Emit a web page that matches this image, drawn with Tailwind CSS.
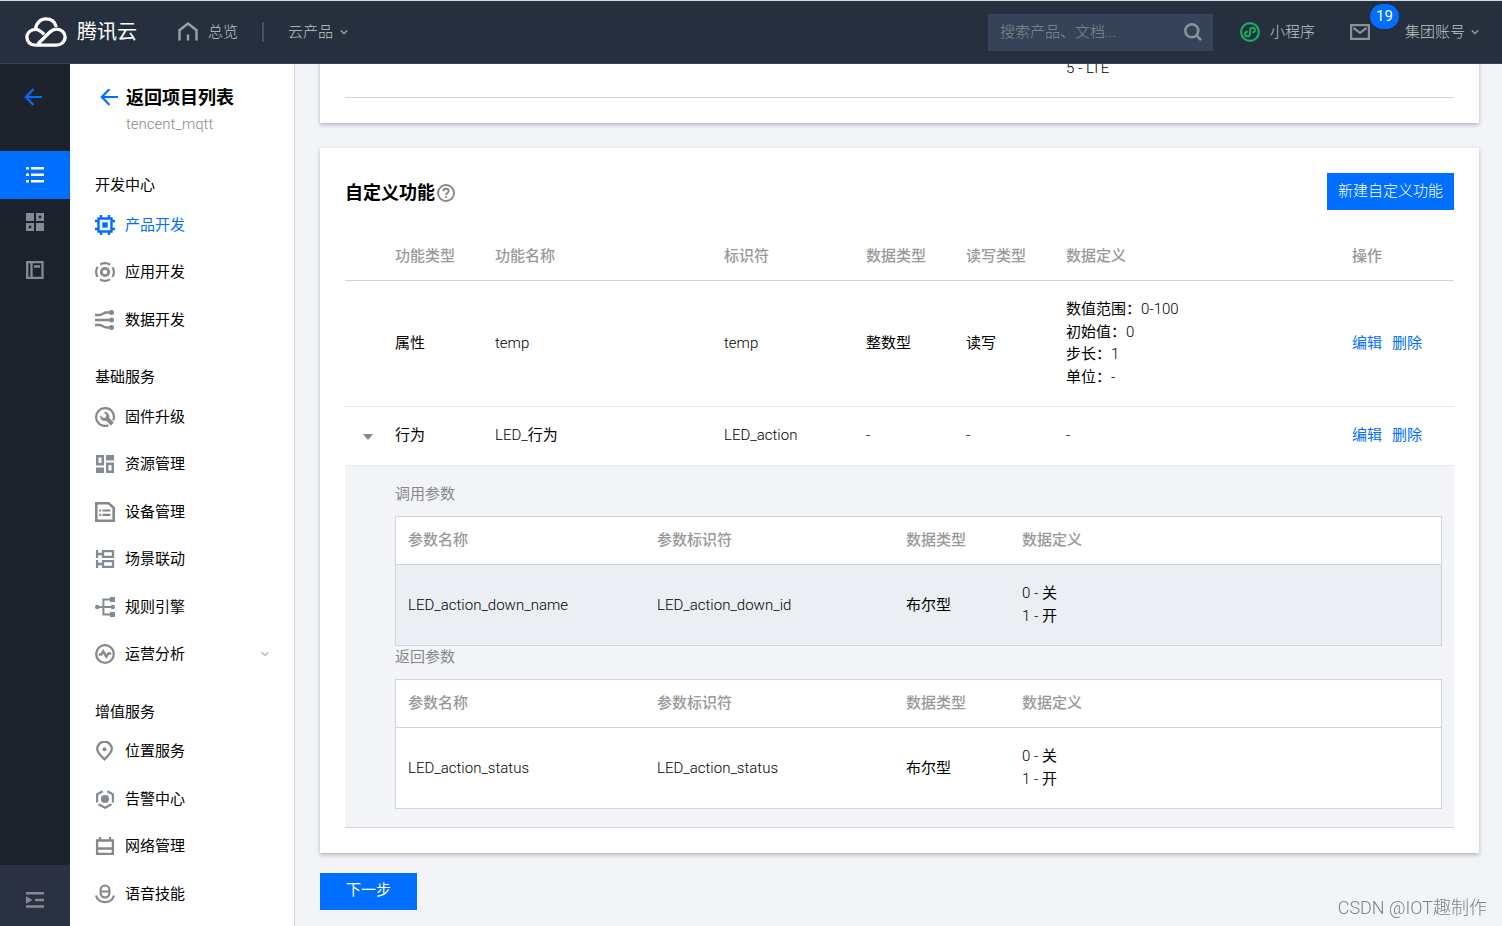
<!DOCTYPE html>
<html lang="zh-CN">
<head>
<meta charset="utf-8">
<meta name="viewport" content="width=device-width, initial-scale=1">
<title>腾讯云 - 产品开发</title>
<script src="https://cdn.jsdelivr.net/npm/@tailwindcss/browser@4"></script>
</head>
<body class="flex h-screen flex-col overflow-hidden bg-[#f2f4f8] font-['Roboto','Noto_Sans_CJK_SC',sans-serif] text-[15px] leading-normal font-light text-black">

<header class="flex h-16 shrink-0 items-center border-t border-b border-t-[#d3dae0] border-b-[#364255] bg-[#262f3e] pr-[23px] pl-[25px] text-[#c1c6c8]">
  <a href="#" class="flex items-center gap-2.5 text-[20px] font-normal text-white" aria-label="腾讯云">
    <svg class="h-[30px] w-[42px]" viewBox="0 0 42 30" fill="none" stroke="currentColor" stroke-width="3.3">
      <path d="M10.6 12.2C11 6 15.600 1.900 21 1.900c5 0 9 3 10.300 8"/>
      <path d="M19.200 17.400C16 14 14 12.300 10.600 12.300 5.700 12.300 1.900 15.800 1.900 20.300s3.800 7.900 8.700 7.900h20.500c5 0 9-3.500 9-8.100 0-4.500-3.700-7.900-8.300-7.900-3.100 0-5.200 1.200-7.600 3.500L12.800 27"/>
    </svg>
    <span>腾讯云</span>
  </a>
  <a href="#" class="ml-[41px] flex items-center gap-2.5">
    <svg class="size-5" viewBox="0 0 20 20" fill="none" stroke="#9ba1a8" stroke-width="2.400"><path d="M1.500 18.500V8.200L10 1.600l8.500 6.600v10.300M10 12.500v6"/></svg>
    <span>总览</span>
  </a>
  <span class="mx-6 h-5 w-0.5 bg-[#475061]"></span>
  <button type="button" class="flex items-center gap-[7px]">云产品
    <svg class="size-2" viewBox="0 0 8 8" fill="none" stroke="#8a9299" stroke-width="1.500"><path d="m.8 2.400 3.200 3.200 3.200-3.200"/></svg>
  </button>
  <form class="ml-auto flex h-[37px] w-[225px] items-center bg-[#354258] pr-[11px] pl-3">
    <input type="text" aria-label="搜索" placeholder="搜索产品、文档..." class="min-w-0 flex-1 bg-transparent outline-none placeholder:text-[#858a90]">
    <button type="submit" aria-label="搜索"><svg class="size-[18px]" viewBox="0 0 18 18" fill="none" stroke="#8b9299" stroke-width="2.600"><circle cx="7.800" cy="7.800" r="6.500"/><path d="m12.400 12.400 4.600 4.600"/></svg></button>
  </form>
  <a href="#" class="ml-[27px] flex items-center gap-2.5">
    <svg class="size-5" viewBox="0 0 20 20" fill="none" stroke="#1aad5c" stroke-width="2.200"><circle cx="10" cy="10" r="8.900"/><path stroke-width="1.900" d="M7.800 9.500c-1.700.1-2.800 1-2.800 2.400 0 1.300 1.100 2.300 2.500 2.300S10 13.200 10 11.900V8.100c0-1.300 1.100-2.300 2.500-2.300S15 6.800 15 8.100c0 1.400-1.100 2.300-2.800 2.400"/></svg>
    <span>小程序</span>
  </a>
  <a href="#" class="relative ml-[35px]" aria-label="消息">
    <svg class="h-4 w-5" viewBox="0 0 20 16" fill="none" stroke="#8b9299" stroke-width="2.200"><path d="M1.100 1.100h17.800v13.800H1.100zM3.500 4 10 8.800 16.500 4"/></svg>
    <span class="absolute -top-5 left-5 flex h-[25px] w-[29px] items-center justify-center rounded-full bg-[#006eff] font-normal text-white">19</span>
  </a>
  <button type="button" class="ml-[35px] flex items-center gap-1.5">集团账号
    <svg class="size-2" viewBox="0 0 8 8" fill="none" stroke="#8a9299" stroke-width="1.500"><path d="m.8 2.400 3.200 3.200 3.200-3.200"/></svg>
  </button>
</header>

<div class="flex min-h-0 flex-1">
  <nav class="flex w-[70px] shrink-0 flex-col bg-[#1e222d] text-[#848b93]" aria-label="控制台">
    <a href="#" class="flex h-[87px] items-start pt-6 pl-6 text-[#006eff]" aria-label="返回">
      <svg class="size-[18px]" viewBox="0 0 18 18" fill="none" stroke="currentColor" stroke-width="2.200"><path d="M9.500 1 1.800 9l7.700 8M2 9h16"/></svg>
    </a>
    <a href="#" class="flex h-12 items-center justify-center bg-[#006eff] text-white" aria-label="项目">
      <svg class="size-[18px]" viewBox="0 0 18 18" fill="currentColor"><path d="M0 1h3v2.500H0zM5 1h13v2.500H5zM0 7.500h3v2.500H0zM5 7.500h13v2.500H5zM0 14h3v2.500H0zM5 14h13v2.500H5z"/></svg>
    </a>
    <a href="#" class="flex h-[46px] items-center justify-center" aria-label="应用">
      <svg class="size-[18px]" viewBox="0 0 18 18" fill="currentColor" fill-rule="evenodd"><path d="M0 0h8v8H0zM10 0h8v8h-8zm2.700 2.700v2.600h2.600V2.700zM0 10h8v8H0zm2.700 2.700v2.600h2.600v-2.600zM10 10h8v8h-8z"/></svg>
    </a>
    <a href="#" class="flex h-[50px] items-center justify-center" aria-label="文档">
      <svg class="size-[18px]" viewBox="0 0 18 18" fill="none" stroke="currentColor" stroke-width="2.300"><path d="M1.200 1.200h15.300v15.600H1.200zM5.500 1v16M8 5.500h6"/></svg>
    </a>
    <button type="button" class="mt-auto flex h-[61px] items-center justify-center bg-[#293142] pt-2" aria-label="展开菜单">
      <svg class="size-[18px]" viewBox="0 0 18 18" fill="currentColor"><path d="M0 1h18v2.500H0zM0 5.300l6.500 3.700L0 12.700zM9 7.700h9v2.500H9zM0 14.300h18v2.500H0z"/></svg>
    </button>
  </nav>

  <aside class="w-[225px] shrink-0 overflow-hidden border-r border-[#cfd5de] bg-white">
    <a href="#" class="flex items-center gap-2 pt-5 pl-[30px] text-[18px] leading-7 font-bold">
      <svg class="size-[18px] text-[#006eff]" viewBox="0 0 18 18" fill="none" stroke="currentColor" stroke-width="2.200"><path d="M9.500 0 1.800 8l7.700 8M2 8h16"/></svg>
      返回项目列表
    </a>
    <p class="h-10 pt-px pl-14 text-[#888]">tencent_mqtt</p>

    <nav class="px-[25px] font-normal text-[#888]" aria-label="项目菜单">
      <h2 class="pt-[22px] pb-[5px] text-black">开发中心</h2>
      <a href="#" class="flex items-center gap-2.5 pt-3 pb-[13px] text-[#006eff]">
        <svg class="size-5" viewBox="0 0 20 20" fill="none" stroke="currentColor" stroke-width="2.400"><path d="M3.500 3.500h13v13h-13zM6 0v3M14 0v3M6 17v3M14 17v3M0 6h3M0 14h3M17 6h3M17 14h3"/><path fill="currentColor" stroke="none" d="M7.300 7.300h5.400v5.400H7.300z"/></svg>
        <span>产品开发</span>
      </a>
      <a href="#" class="flex items-center gap-2.5 pt-3 pb-[13px]">
        <svg class="size-5" viewBox="0 0 20 20" fill="none" stroke="currentColor"><circle cx="10" cy="10" r="3.700" stroke-width="2.800"/><circle cx="10" cy="10" r="8.900" stroke-width="2.200" stroke-dasharray="10.480 3.500" stroke-dashoffset="5.240"/></svg>
        <span class="text-black">应用开发</span>
      </a>
      <a href="#" class="flex items-center gap-2.5 pt-3 pb-[13px]">
        <svg class="size-5" viewBox="0 0 20 20" fill="none" stroke="currentColor" stroke-width="2.300"><path d="M0 5h4.500c3 0 4-2.500 7-2.500H16M0 10h16M0 15h4.500c3 0 4 2.500 7 2.500H16"/><g fill="currentColor" stroke="none"><circle cx="16.500" cy="2.500" r="2.500"/><circle cx="16.500" cy="10" r="2.500"/><circle cx="16.500" cy="17.500" r="2.500"/></g></svg>
        <span class="text-black">数据开发</span>
      </a>

      <h2 class="pt-[22px] pb-[5px] text-black">基础服务</h2>
      <a href="#" class="flex items-center gap-2.5 pt-3 pb-[13px]">
        <svg class="size-5" viewBox="0 0 20 20" fill="none" stroke="currentColor" stroke-width="2.200"><path d="M18.200 13.500A8.900 8.900 0 1 0 13.500 18.200"/><path fill="currentColor" stroke="none" d="M8.600 5.200a4.600 4.600 0 0 1 5.600 5.700l4.600 4.600-2.900 2.900-4.700-4.700a4.600 4.600 0 0 1-5.900-5.400l3 2.700 2.500-.6.600-2.500z"/></svg>
        <span class="text-black">固件升级</span>
      </a>
      <a href="#" class="flex items-center gap-2.5 pt-3 pb-[13px]">
        <svg class="size-5 text-[#848b93]" viewBox="0 0 20 20" fill="currentColor" fill-rule="evenodd"><path d="M1 1h8v10.500H1zm2.500 2.500v5.500h3V3.500zM11 1h8v5.500h-8zM1 13.500h8V19H1zM11 8.500h8V19h-8zm2.500 2.500v5.500h3V11z"/></svg>
        <span class="text-black">资源管理</span>
      </a>
      <a href="#" class="flex items-center gap-2.5 pt-3 pb-[13px]">
        <svg class="size-5" viewBox="0 0 20 20" fill="none" stroke="currentColor" stroke-width="2.600"><path d="M1.300 1.300h12.300l5.100 4.600v12.800H1.300z"/><path stroke-width="2.200" d="M4.200 8.500h2M7.500 8.500h8M4.200 12.800h2M7.500 12.800h8"/></svg>
        <span class="text-black">设备管理</span>
      </a>
      <a href="#" class="flex items-center gap-2.5 pt-3 pb-[13px]">
        <svg class="size-5 text-[#848b93]" viewBox="0 0 20 20" fill="none" stroke="currentColor" stroke-width="2.300"><path d="M2.100 1v8M2 5h5M8 2.200h10v5.600H8zM2.100 11v8M2 15h5M8 12.200h10v5.600H8z"/></svg>
        <span class="text-black">场景联动</span>
      </a>
      <a href="#" class="flex items-center gap-2.5 pt-3 pb-[13px]">
        <svg class="size-5 text-[#848b93]" viewBox="0 0 20 20" fill="none" stroke="currentColor" stroke-width="2"><path d="M2 10h16M15 2.400H8.400v15.200H15"/><g fill="currentColor" stroke="none"><circle cx="2.200" cy="10" r="2.200"/><circle cx="17.800" cy="10" r="2.200"/><path d="M15 0h5v5h-5zM15 15h5v5h-5z"/></g></svg>
        <span class="text-black">规则引擎</span>
      </a>
      <a href="#" class="flex items-center gap-2.5 pt-3 pb-[13px]">
        <svg class="size-5" viewBox="0 0 20 20" fill="none" stroke="currentColor" stroke-width="2.300"><circle cx="10" cy="10" r="8.800"/><path d="M3.800 10.500h2.400l2-3.200 3.200 5.400 2-3.200h2.800"/></svg>
        <span class="text-black">运营分析</span>
        <svg class="ml-auto size-2" viewBox="0 0 8 8" fill="none" stroke="#bbb" stroke-width="1.500"><path d="m.6 2.300 3.400 3.200 3.400-3.200"/></svg>
      </a>

      <h2 class="pt-[22px] pb-[5px] text-black">增值服务</h2>
      <a href="#" class="flex items-center gap-2.5 pt-3 pb-[13px]">
        <svg class="size-5" viewBox="0 0 20 20" fill="none" stroke="currentColor" stroke-width="2.300"><path d="M9.500 18.300C6 14.800 2.200 11.500 2.200 8a7.300 7.300 0 0 1 14.600 0c0 3.500-3.800 6.800-7.300 10.300z"/><circle cx="9.500" cy="8.200" r="2" fill="currentColor" stroke="none"/></svg>
        <span class="text-black">位置服务</span>
      </a>
      <a href="#" class="flex items-center gap-2.5 pt-3 pb-[13px]">
        <svg class="size-5 text-[#848b93]" viewBox="0 0 20 20" fill="none" stroke="currentColor" stroke-width="2.200"><path d="M7.700 2.200 2.100 5.300v8.200M12.300 2.200l5.600 3.100v8.200M3.500 15.200l6.500 3.600 6.500-3.600"/><circle cx="10" cy="10" r="4.100" fill="currentColor" stroke="none"/></svg>
        <span class="text-black">告警中心</span>
      </a>
      <a href="#" class="flex items-center gap-2.5 pt-3 pb-[13px]">
        <svg class="size-5" viewBox="0 0 20 20" fill="none" stroke="currentColor" stroke-width="2.300"><path d="M2.100 4.500h15.800v13.300H2.100zM5 1v3M15 1v3M2 12.500h16"/></svg>
        <span class="text-black">网络管理</span>
      </a>
      <a href="#" class="flex items-center gap-2.5 pt-3 pb-[13px]">
        <svg class="size-5" viewBox="0 0 20 20" fill="none" stroke="currentColor" stroke-width="2.200"><rect x="5.600" y="1.500" width="8.800" height="12" rx="4.400"/><path d="M6 7.500h8M1 11.500c1.200 4.200 4.600 6.700 9 6.700s7.800-2.500 9-6.700"/></svg>
        <span class="text-black">语音技能</span>
      </a>
    </nav>
  </aside>

  <main class="min-w-0 flex-1 overflow-hidden pr-[23px] pl-[25px]">
    <section class="-mt-[7px] mb-[25px] bg-white px-[25px] pb-[25px] shadow-[0_2px_4px_rgba(54,58,80,0.32)]">
      <div class="h-[41px] border-b border-[#cfd5de] pl-[721px]">5 - LTE</div>
    </section>

    <section class="bg-white p-[25px] shadow-[0_2px_4px_rgba(54,58,80,0.32)]">
      <div class="mb-5 flex items-center justify-between">
        <h1 class="flex items-center gap-0.5 pt-0.5 text-[18px] font-bold">自定义功能
          <svg class="size-[18px]" viewBox="0 0 18 18" fill="none" stroke="#888" stroke-width="1.900"><circle cx="9" cy="9" r="8"/><path d="M6.300 7.200c0-1.500 1.200-2.500 2.700-2.500s2.700 1 2.700 2.400c0 1.800-2.700 1.800-2.700 3.900M9 12.200v1.900"/></svg>
        </h1>
        <button type="button" class="h-[37px] bg-[#006eff] px-[11px] text-white">新建自定义功能</button>
      </div>

      <table class="w-full table-fixed text-left">
        <colgroup>
          <col class="w-[50px]"><col class="w-[100px]"><col class="w-[229px]"><col class="w-[142px]"><col class="w-[100px]"><col class="w-[100px]"><col class="w-[286px]"><col class="w-[102px]">
        </colgroup>
        <thead>
          <tr class="h-[50px] border-b border-[#cfd5de] text-[#999]">
            <td></td>
            <th class="pt-0.5 font-medium">功能类型</th><th class="pt-0.5 font-medium">功能名称</th><th class="pt-0.5 font-medium">标识符</th><th class="pt-0.5 font-medium">数据类型</th><th class="pt-0.5 font-medium">读写类型</th><th class="pt-0.5 font-medium">数据定义</th><th class="pt-0.5 font-medium">操作</th>
          </tr>
        </thead>
        <tbody>
          <tr class="h-[126px] border-b border-[#e5e8ed]">
            <td></td><td class="font-normal">属性</td><td>temp</td><td>temp</td><td class="font-normal">整数型</td><td class="font-normal">读写</td>
            <td><span class="font-normal">数值范围：</span>0-100<br><span class="font-normal">初始值：</span>0<br><span class="font-normal">步长：</span>1<br><span class="font-normal">单位：</span>-</td>
            <td class="font-normal text-[#006eff]"><div class="flex gap-2.5"><a href="#">编辑</a><a href="#">删除</a></div></td>
          </tr>
          <tr class="h-[59px] border-b border-[#e5e8ed]">
            <td><button type="button" class="flex pt-0.5 pl-[18px]" aria-label="收起"><svg class="h-1.5 w-2.5" viewBox="0 0 10 6" fill="#888"><path d="M0 0h10L5 6z"/></svg></button></td>
            <td class="font-normal">行为</td><td>LED_<span class="font-normal">行为</span></td><td>LED_action</td><td>-</td><td>-</td><td>-</td>
            <td class="font-normal text-[#006eff]"><div class="flex gap-2.5"><a href="#">编辑</a><a href="#">删除</a></div></td>
          </tr>
          <tr class="border-b border-[#cfd5de] bg-[#f2f4f8]">
            <td colspan="8" class="pt-[17px] pr-3 pb-[18px] pl-[50px]">
              <h3 class="mb-2.5 h-[23px] font-normal text-[#888]">调用参数</h3>
              <div class="border border-[#cfd5de] bg-white">
                <table class="w-full table-fixed text-left">
                  <colgroup><col class="w-[249px]"><col class="w-[249px]"><col class="w-[116px]"><col class="w-[431px]"></colgroup>
                  <thead><tr class="h-12 border-b border-[#cfd5de] text-[#999]"><th class="pl-3 font-medium">参数名称</th><th class="pl-3 font-medium">参数标识符</th><th class="pl-3 font-medium">数据类型</th><th class="pl-3 font-medium">数据定义</th></tr></thead>
                  <tbody><tr class="h-20 bg-[#ebeef3]"><td class="pl-3">LED_action_down_name</td><td class="pl-3">LED_action_down_id</td><td class="pl-3 font-normal">布尔型</td><td class="pl-3">0 - <span class="font-normal">关</span><br>1 - <span class="font-normal">开</span></td></tr></tbody>
                </table>
              </div>
              <h3 class="mb-2.5 h-[23px] font-normal text-[#888]">返回参数</h3>
              <div class="border border-[#cfd5de] bg-white">
                <table class="w-full table-fixed text-left">
                  <colgroup><col class="w-[249px]"><col class="w-[249px]"><col class="w-[116px]"><col class="w-[431px]"></colgroup>
                  <thead><tr class="h-12 border-b border-[#cfd5de] text-[#999]"><th class="pl-3 font-medium">参数名称</th><th class="pl-3 font-medium">参数标识符</th><th class="pl-3 font-medium">数据类型</th><th class="pl-3 font-medium">数据定义</th></tr></thead>
                  <tbody><tr class="h-20"><td class="pl-3">LED_action_status</td><td class="pl-3">LED_action_status</td><td class="pl-3 font-normal">布尔型</td><td class="pl-3">0 - <span class="font-normal">关</span><br>1 - <span class="font-normal">开</span></td></tr></tbody>
                </table>
              </div>
            </td>
          </tr>
        </tbody>
      </table>
    </section>

    <button type="button" class="mt-5 h-[37px] w-[97px] bg-[#006eff] pb-0.5 font-normal text-white">下一步</button>
  </main>
</div>

<p class="fixed right-[15px] bottom-[5px] text-[18px] text-[#808286]">CSDN @IOT趣制作</p>
</body>
</html>
